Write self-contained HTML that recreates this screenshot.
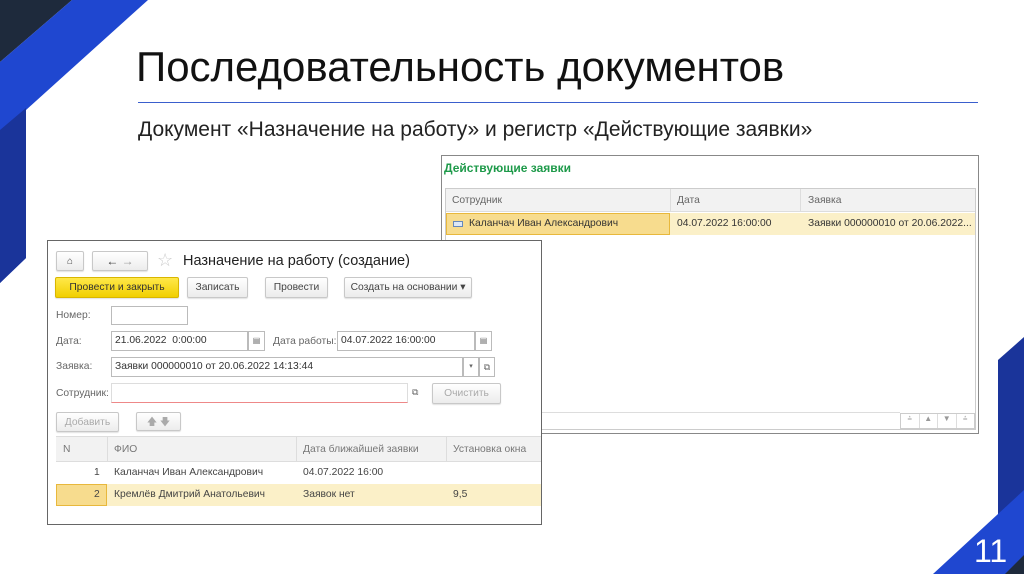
<!DOCTYPE html>
<html><head><meta charset="utf-8"><style>
*{margin:0;padding:0;box-sizing:border-box}
body{width:1024px;height:574px;position:relative;overflow:hidden;background:#fff;font-family:"Liberation Sans",sans-serif;color:#333}
.a{position:absolute}
.t{font-size:10.3px;color:#444;white-space:nowrap}
.btn{position:absolute;border:1px solid #c8c8c8;border-radius:2px;background:linear-gradient(#fff,#ececec);font-size:10.3px;color:#444;text-align:center;line-height:19px;box-shadow:0 1px 1px rgba(0,0,0,.12);white-space:nowrap}
.inp{position:absolute;border:1px solid #bbb;background:#fff;font-size:10.3px;line-height:18px;padding-left:3px;color:#333;white-space:nowrap;overflow:hidden}
</style></head><body>
<svg class="a" style="left:0;top:0" width="1024" height="574">
<polygon points="0,0 72,0 0,62" fill="#1e2a3c"/>
<polygon points="72,0 148,0 26,110 26,258 0,283 0,62" fill="#1f47d0"/>
<polygon points="26,108 26,258 0,283 0,130" fill="#1a349a"/>
<polygon points="1024,337 998,360 998,574 1024,574" fill="#1a349a"/>
<polygon points="1024,490 933,574 1024,574" fill="#1f47d0"/>
<polygon points="1024,555 1005,574 1024,574" fill="#1e2a3c"/>
</svg>
<div class="a" style="left:136px;top:43px;font-size:42px;color:#111;white-space:nowrap">Последовательность документов</div>
<div class="a" style="left:138px;top:102px;width:840px;height:1px;background:#3a5fcd"></div>
<div class="a" style="left:138px;top:118px;font-size:21px;color:#222;white-space:nowrap">Документ «Назначение на работу» и регистр «Действующие заявки»</div>

<!-- right window -->
<div class="a" style="left:441px;top:155px;width:538px;height:279px;border:1px solid #888;background:#fff"></div>
<div class="a" style="left:444px;top:161px;font-size:12px;font-weight:bold;color:#1e9a4a">Действующие заявки</div>
<div class="a" style="left:445px;top:188px;width:531px;height:242px;border:1px solid #ccc"></div>
<div class="a" style="left:446px;top:189px;width:529px;height:23px;background:#f2f2f2;border-bottom:1px solid #ddd"></div>
<div class="a" style="left:670px;top:189px;width:1px;height:23px;background:#ddd"></div>
<div class="a" style="left:800px;top:189px;width:1px;height:23px;background:#ddd"></div>
<div class="a t" style="left:452px;top:195px;color:#666">Сотрудник</div>
<div class="a t" style="left:677px;top:195px;color:#666">Дата</div>
<div class="a t" style="left:808px;top:195px;color:#666">Заявка</div>
<div class="a" style="left:446px;top:213px;width:529px;height:22px;background:#fbf0c8"></div>
<div class="a" style="left:446px;top:213px;width:224px;height:22px;background:#f7dc8e;border:1px solid #e8b83c"></div>
<div class="a" style="left:453px;top:221px;width:10px;height:6px;border:1px solid #6688bb;background:#dde8f6"></div>
<div class="a t" style="left:469px;top:218px;color:#333">Каланчач Иван Александрович</div>
<div class="a t" style="left:677px;top:218px;color:#333">04.07.2022 16:00:00</div>
<div class="a t" style="left:808px;top:218px;color:#333">Заявки 000000010 от 20.06.2022...</div>
<div class="a" style="left:900px;top:413px;width:75px;height:16px;border:1px solid #ccc;display:flex">
<div style="flex:1;border-right:1px solid #ddd;font-size:8px;text-align:center;color:#999">⩮</div><div style="flex:1;border-right:1px solid #ddd;font-size:8px;text-align:center;color:#999">▲</div><div style="flex:1;border-right:1px solid #ddd;font-size:8px;text-align:center;color:#999">▼</div><div style="flex:1;font-size:8px;text-align:center;color:#999">⩮</div></div>
<div class="a" style="left:446px;top:412px;width:454px;height:1px;background:#ddd"></div>

<!-- left window -->
<div class="a" style="left:47px;top:240px;width:495px;height:285px;border:1px solid #666;background:#fff"></div>
<div class="btn" style="left:56px;top:251px;width:28px;height:20px;font-size:10px">⌂</div>
<div class="btn" style="left:92px;top:251px;width:56px;height:20px;font-size:12px;line-height:18px"><span style="color:#333">←</span> <span style="color:#999">→</span></div>
<div class="a" style="left:157px;top:250px;font-size:18px;color:#ccc">☆</div>
<div class="a" style="left:183px;top:253px;font-size:14.5px;color:#222;white-space:nowrap">Назначение на работу (создание)</div>
<div class="btn" style="left:55px;top:277px;width:124px;height:21px;background:linear-gradient(#ffe84a,#f1cf00);border-color:#d9b600;color:#333">Провести и закрыть</div>
<div class="btn" style="left:187px;top:277px;width:61px;height:21px">Записать</div>
<div class="btn" style="left:265px;top:277px;width:63px;height:21px">Провести</div>
<div class="btn" style="left:344px;top:277px;width:128px;height:21px">Создать на основании ▾</div>
<div class="a t" style="left:56px;top:310px;color:#666">Номер:</div>
<div class="inp" style="left:111px;top:306px;width:77px;height:19px"></div>
<div class="a t" style="left:56px;top:336px;color:#666">Дата:</div>
<div class="inp" style="left:111px;top:331px;width:137px;height:20px">21.06.2022 &nbsp;0:00:00</div>
<div class="inp" style="left:248px;top:331px;width:17px;height:20px;font-size:8px;padding:0;text-align:center;color:#666">▤</div>
<div class="a t" style="left:273px;top:336px;color:#666">Дата работы:</div>
<div class="inp" style="left:337px;top:331px;width:138px;height:20px">04.07.2022 16:00:00</div>
<div class="inp" style="left:475px;top:331px;width:17px;height:20px;font-size:8px;padding:0;text-align:center;color:#666">▤</div>
<div class="a t" style="left:56px;top:361px;color:#666">Заявка:</div>
<div class="inp" style="left:111px;top:357px;width:352px;height:20px">Заявки 000000010 от 20.06.2022 14:13:44</div>
<div class="inp" style="left:463px;top:357px;width:16px;height:20px;font-size:7px;padding:0;text-align:center;color:#666">▾</div>
<div class="inp" style="left:479px;top:357px;width:16px;height:20px;font-size:9px;padding:0;text-align:center;color:#666">⧉</div>
<div class="a t" style="left:56px;top:388px;color:#666">Сотрудник:</div>
<div class="inp" style="left:111px;top:383px;width:297px;height:20px;border-color:#ddd;border-bottom:1px solid #e88"></div>
<div class="a" style="left:412px;top:387px;font-size:9px;color:#666">⧉</div>
<div class="btn" style="left:432px;top:383px;width:69px;height:21px;color:#aaa">Очистить</div>
<div class="btn" style="left:56px;top:412px;width:63px;height:20px;color:#aaa">Добавить</div>
<div class="btn" style="left:136px;top:412px;width:45px;height:19px;color:#aaa;font-size:10px">🡅 🡇</div>
<div class="a" style="left:56px;top:436px;width:485px;height:76px;border-top:1px solid #ddd"></div>
<div class="a" style="left:56px;top:437px;width:485px;height:25px;background:#f2f2f2;border-bottom:1px solid #ddd"></div>
<div class="a" style="left:107px;top:437px;width:1px;height:25px;background:#ddd"></div>
<div class="a" style="left:296px;top:437px;width:1px;height:25px;background:#ddd"></div>
<div class="a" style="left:446px;top:437px;width:1px;height:25px;background:#ddd"></div>
<div class="a t" style="left:63px;top:444px;color:#777">N</div>
<div class="a t" style="left:114px;top:444px;color:#777">ФИО</div>
<div class="a t" style="left:303px;top:444px;color:#777">Дата ближайшей заявки</div>
<div class="a t" style="left:453px;top:444px;color:#777">Установка окна</div>
<div class="a t" style="left:94px;top:467px">1</div>
<div class="a t" style="left:114px;top:467px">Каланчач Иван Александрович</div>
<div class="a t" style="left:303px;top:467px">04.07.2022 16:00</div>
<div class="a" style="left:56px;top:484px;width:485px;height:22px;background:#fbf0c8"></div>
<div class="a" style="left:56px;top:484px;width:51px;height:22px;background:#f7dc8e;border:1px solid #e8b83c"></div>
<div class="a t" style="left:94px;top:489px">2</div>
<div class="a t" style="left:114px;top:489px">Кремлёв Дмитрий Анатольевич</div>
<div class="a t" style="left:303px;top:489px">Заявок нет</div>
<div class="a t" style="left:453px;top:489px">9,5</div>

<div class="a" style="left:974px;top:533px;font-size:32px;color:#fff">11</div>
</body></html>
